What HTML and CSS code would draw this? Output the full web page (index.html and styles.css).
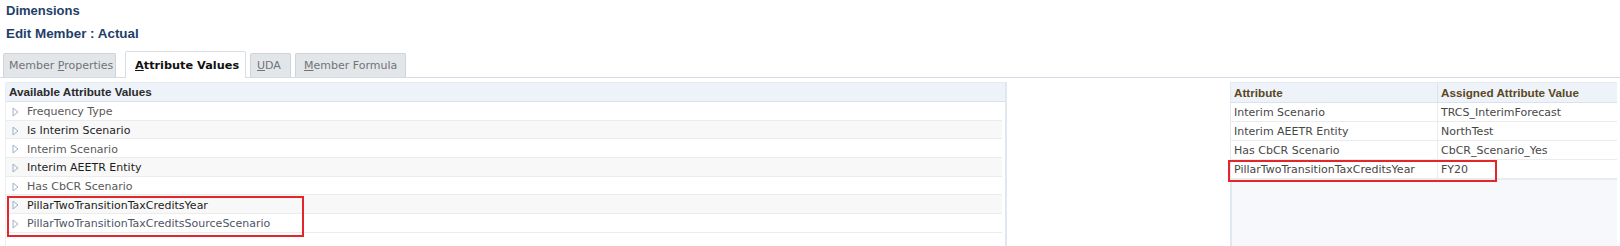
FILE: index.html
```html
<!DOCTYPE html>
<html>
<head>
<meta charset="utf-8">
<link rel="stylesheet" href="styles.css">
</head>
<body>
<div class="page">
  <div class="title">Dimensions</div>
  <div class="subtitle">Edit Member : Actual</div>
  <div class="tabs">
    <div class="tab tab-props">Member <u>P</u>roperties</div>
    <div class="tab tab-active"><u>A</u>ttribute Values</div>
    <div class="tab tab-uda"><u>U</u>DA</div>
    <div class="tab tab-formula"><u>M</u>ember Formula</div>
  </div>
  <div class="content">
    <div class="left-panel">
      <div class="lp-header">Available Attribute Values</div>
      <div class="lp-row"><svg class="tri" width="7" height="10" viewBox="0 0 7 10"><path d="M1 1 L6 5 L1 9 Z" fill="none" stroke="#9db1c9" stroke-width="1"/></svg><span>Frequency Type</span></div>
      <div class="lp-row alt dark"><svg class="tri" width="7" height="10" viewBox="0 0 7 10"><path d="M1 1 L6 5 L1 9 Z" fill="none" stroke="#9db1c9" stroke-width="1"/></svg><span>Is Interim Scenario</span></div>
      <div class="lp-row"><svg class="tri" width="7" height="10" viewBox="0 0 7 10"><path d="M1 1 L6 5 L1 9 Z" fill="none" stroke="#9db1c9" stroke-width="1"/></svg><span>Interim Scenario</span></div>
      <div class="lp-row alt dark"><svg class="tri" width="7" height="10" viewBox="0 0 7 10"><path d="M1 1 L6 5 L1 9 Z" fill="none" stroke="#9db1c9" stroke-width="1"/></svg><span>Interim AEETR Entity</span></div>
      <div class="lp-row"><svg class="tri" width="7" height="10" viewBox="0 0 7 10"><path d="M1 1 L6 5 L1 9 Z" fill="none" stroke="#9db1c9" stroke-width="1"/></svg><span>Has CbCR Scenario</span></div>
      <div class="lp-row alt dark"><svg class="tri" width="7" height="10" viewBox="0 0 7 10"><path d="M1 1 L6 5 L1 9 Z" fill="none" stroke="#9db1c9" stroke-width="1"/></svg><span>PillarTwoTransitionTaxCreditsYear</span></div>
      <div class="lp-row blue"><svg class="tri" width="7" height="10" viewBox="0 0 7 10"><path d="M1 1 L6 5 L1 9 Z" fill="none" stroke="#9db1c9" stroke-width="1"/></svg><span>PillarTwoTransitionTaxCreditsSourceScenario</span></div>
      <div class="mark mark-left"></div>
    </div>
    <div class="right-panel">
      <table class="assigned">
        <thead>
          <tr><th class="c1">Attribute</th><th class="c2">Assigned Attribute Value</th></tr>
        </thead>
        <tbody>
          <tr><td>Interim Scenario</td><td>TRCS_InterimForecast</td></tr>
          <tr><td>Interim AEETR Entity</td><td>NorthTest</td></tr>
          <tr><td>Has CbCR Scenario</td><td>CbCR_Scenario_Yes</td></tr>
          <tr><td>PillarTwoTransitionTaxCreditsYear</td><td>FY20</td></tr>
        </tbody>
      </table>
      <div class="filler"></div>
      <div class="mark mark-right"></div>
    </div>
  </div>
</div>
</body>
</html>
```

FILE: styles.css
```css
html, body {
  margin: 0;
  padding: 0;
  background: #ffffff;
}
body {
  font-family: "DejaVu Sans", Verdana, sans-serif;
  font-size: 11px;
  color: #444;
  width: 1620px;
  height: 246px;
  overflow: hidden;
}
.page {
  display: flex;
  flex-direction: column;
  height: 246px;
}
.title, .subtitle {
  font-family: "Liberation Sans", Arial, sans-serif;
  font-weight: bold;
  font-size: 13px;
  color: #1f3e6a;
  padding-left: 6px;
  height: 22px;
  line-height: 22px;
}
.subtitle {
  font-size: 13.4px;
  height: 23px;
  line-height: 24px;
}
.tabs {
  display: flex;
  align-items: flex-end;
  margin-top: 6px;
  height: 26px;
  border-bottom: 1px solid #d3dbe4;
  padding-left: 3px;
}
.tab {
  height: 24px;
  line-height: 24px;
  box-sizing: border-box;
  background: #e3e6e9;
  border: 1px solid #cfd4d9;
  border-bottom: none;
  border-radius: 2px 2px 0 0;
  color: #707478;
  padding: 0 5px;
  margin-right: 4px;
  white-space: nowrap;
}
.tab u { text-decoration: underline; }
.tab-props { width: 113px; padding-left: 5px; margin-right: 9px; }
.tab-active {
  background: #ffffff;
  color: #111;
  font-weight: bold;
  font-size: 11.3px;
  line-height: 27px;
  width: 121px;
  padding-left: 9px;
  border-color: #d9dee4;
  margin-bottom: -1px;
  height: 27px;
}
.tab-uda { width: 41px; padding-left: 6px; }
.tab-formula { width: 111px; padding-left: 8px; }

.content {
  display: flex;
  flex: 1;
  padding-top: 4px;
}
.left-panel {
  position: relative;
  margin-left: 5px;
  width: 1002px;
  box-sizing: border-box;
  border-right: 2px solid #e1e7ee;
  border-left: 1px solid #edf0f3;
}
.lp-header {
  height: 20px;
  line-height: 18px;
  background: #eef2f9;
  border-bottom: 1px solid #dbe2ec;
  border-top: 1px solid #e6ebf2;
  box-sizing: border-box;
  font-family: "Liberation Sans", Arial, sans-serif;
  font-weight: bold;
  font-size: 11.7px;
  color: #2b2b2b;
  padding-left: 3px;
}
.lp-row {
  display: flex;
  align-items: center;
  height: 18.7px;
  box-sizing: border-box;
  border-bottom: 1px solid #ececec;
  padding-top: 2px;
  padding-left: 6px;
  color: #595959;
  margin-right: 3px;
}
.lp-row.alt { background: #f8f8f8; }
.lp-row.dark { color: #1c1c1c; }
.lp-row.blue { color: #4e5565; }
.tri { flex: none; margin-right: 8px; }

.right-panel {
  position: relative;
  margin-left: 223px;
  width: 387px;
  display: flex;
  flex-direction: column;
}
.assigned {
  border-collapse: collapse;
  width: 100%;
  table-layout: fixed;
}
.assigned th {
  height: 19px;
  padding: 0 0 0 3px;
  text-align: left;
  background: #eef2f9;
  border-bottom: 1px solid #dbe2ec;
  border-top: 1px solid #e6ebf2;
  font-family: "Liberation Sans", Arial, sans-serif;
  font-weight: bold;
  font-size: 11.7px;
  color: #5a4821;
}
.assigned th.c1 { width: 203px; border-left: 1px solid #e3e8ef; }
.assigned th.c2 { border-left: 1px solid #dbe2ec; }
.assigned td {
  height: 18px;
  padding: 0 0 0 3px;
  border-bottom: 1px solid #ececec;
  color: #474747;
  white-space: nowrap;
}
.assigned td:first-child { border-left: 1px solid #e3e8ef; }
.assigned td + td { border-left: 1px solid #ececec; }
.filler {
  flex: 1;
  background: #f6f8fb;
  border-left: 2px solid #e2e8ef;
  border-top: 1px solid #e8ecf1;
}
.mark {
  position: absolute;
  border: 2px solid #e3262b;
  box-sizing: border-box;
  pointer-events: none;
}
.mark-left {
  left: 1px;
  top: 114px;
  width: 297px;
  height: 41px;
}
.mark-right {
  left: -2px;
  top: 78px;
  width: 269px;
  height: 22px;
}
```
